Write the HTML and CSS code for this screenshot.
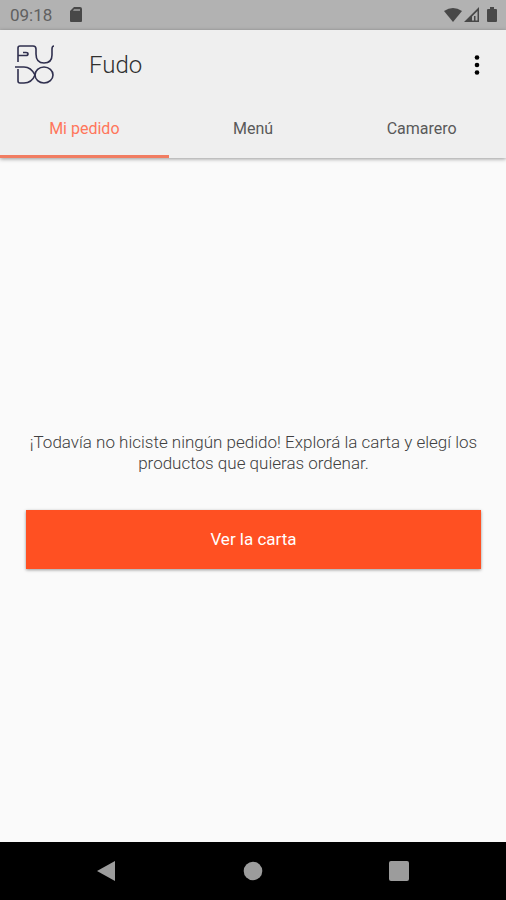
FILE: index.html
```html
<!DOCTYPE html>
<html lang="es">
<head>
<meta charset="utf-8">
<meta name="viewport" content="width=device-width, initial-scale=1">
<title>Fudo</title>
<link rel="stylesheet" href="styles.css">
</head>
<body>
<div class="status">
  <span class="clock">09:18</span>
  <svg class="sd" width="14" height="16" viewBox="0 0 14 16" aria-hidden="true"><path fill="#484848" d="M5 0h6q2 0 2 2v12q0 1-1 1H2q-1 0-1-1V4z"/><path fill="#8c8c8c" d="M5 2h6v2H4z"/></svg>
  <svg class="signals" width="54" height="18" viewBox="0 0 54 18" aria-hidden="true">
    <path fill="#484848" d="M0 5Q9-1 18 5L9 16z"/>
    <path fill="#484848" fill-rule="evenodd" d="M20 16L35 1v15zM28 10.500v4h5.500V5z"/>
    <path fill="#484848" d="M30 10h1.500v5H30z"/>
    <path fill="#484848" d="M46 1h4v2h2q1 0 1 1v11q0 1-1 1h-8q-1 0-1-1V4q0-1 1-1h2z"/>
  </svg>
</div>
<header class="header">
  <div class="bar">
    <svg class="logo" width="40" height="40" viewBox="0 0 40 40" fill="none" stroke="#30304f" stroke-width="1.6" aria-hidden="true">
      <path d="M3 17V3Q3 1 5 1H18Q21 1 21 4V9Q21 18 29 18Q37 18 37 10V4Q37 1 39 1"/>
      <path d="M3 10.500H11Q13 10.500 13 9T11 7.500H8"/>
      <path d="M0 22H9C15 22 18 26 20 30C18 35 15 38 9 38H5Q3 38 3 36V24"/>
      <ellipse cx="29" cy="30" rx="9" ry="8"/>
    </svg>
    <h1 class="title">Fudo</h1>
    <button class="more" type="button" aria-label="Más opciones">
      <svg width="6" height="22" viewBox="0 0 6 22" aria-hidden="true"><circle cx="3" cy="3.500" r="2.300"/><circle cx="3" cy="11" r="2.300"/><circle cx="3" cy="18.500" r="2.300"/></svg>
    </button>
  </div>
  <nav class="tabs">
    <a class="tab active" href="#pedido" aria-current="page">Mi pedido</a>
    <a class="tab" href="#menu">Menú</a>
    <a class="tab" href="#camarero">Camarero</a>
  </nav>
</header>
<main class="content">
  <p class="message">¡Todavía no hiciste ningún pedido! Explorá la carta y elegí los productos que quieras ordenar.</p>
  <button class="primary" type="button">Ver la carta</button>
</main>
<footer class="system">
  <button class="key" type="button" aria-label="Atrás"><svg width="20" height="22" viewBox="0 0 20 22"><path d="M0 11L18 1v20z"/></svg></button>
  <button class="key" type="button" aria-label="Inicio"><svg width="20" height="20" viewBox="0 0 20 20"><circle cx="10" cy="10" r="9.300"/></svg></button>
  <button class="key" type="button" aria-label="Recientes"><svg width="20" height="20" viewBox="0 0 20 20"><rect width="20" height="20" rx="2"/></svg></button>
</footer>
</body>
</html>
```
FILE: styles.css
```css
* {
  box-sizing: border-box;
}

body {
  margin: 0;
  min-height: 100vh;
  display: flex;
  flex-direction: column;
  background: #fafafa;
  color: #404040;
  font: 16px/21px Roboto, "Liberation Sans", sans-serif;
}

button {
  padding: 0;
  border: 0;
  background: none;
  font: inherit;
}

svg {
  display: block;
}

.status {
  display: flex;
  align-items: center;
  height: 30px;
  padding: 0 8px 0 10px;
  background: #b2b2b2;
}

.clock {
  font-size: 17px;
  color: #606060;
}

.sd {
  margin-left: 17px;
}

.signals {
  margin-left: auto;
}

.header {
  background: #efefef;
  box-shadow: 0 1px 4px rgba(0, 0, 0, 0.4);
}

.bar {
  display: flex;
  align-items: center;
  height: 70px;
  padding: 0 16px 0 15px;
}

.title {
  margin: 0 0 0 34px;
  font-size: 24px;
  line-height: 32px;
  font-weight: 300;
  color: #303030;
}

.more {
  display: flex;
  justify-content: center;
  width: 26px;
  margin-left: auto;
}

.tabs {
  display: grid;
  grid-template-columns: repeat(3, 1fr);
}

.tab {
  height: 58px;
  padding-top: 18px;
  border-bottom: 3px solid transparent;
  text-align: center;
  text-decoration: none;
  color: #595959;
}

.active {
  color: #ff765b;
  border-color: #f17d62;
}

.content {
  flex: 1;
  display: flex;
  flex-direction: column;
  justify-content: center;
  padding: 0 25px 0 26px;
}

.message {
  margin: 0 0 36px;
  font-size: 17px;
  font-weight: 300;
  text-align: center;
}

.primary {
  height: 59px;
  background: #ff5022;
  color: #fff;
  font-size: 17px;
  box-shadow: 0 1px 3px rgba(0, 0, 0, 0.4);
}

.system {
  display: flex;
  justify-content: center;
  align-items: center;
  gap: 126px;
  height: 58px;
  background: #000;
}

.key svg {
  fill: #9c9c9c;
}
```
